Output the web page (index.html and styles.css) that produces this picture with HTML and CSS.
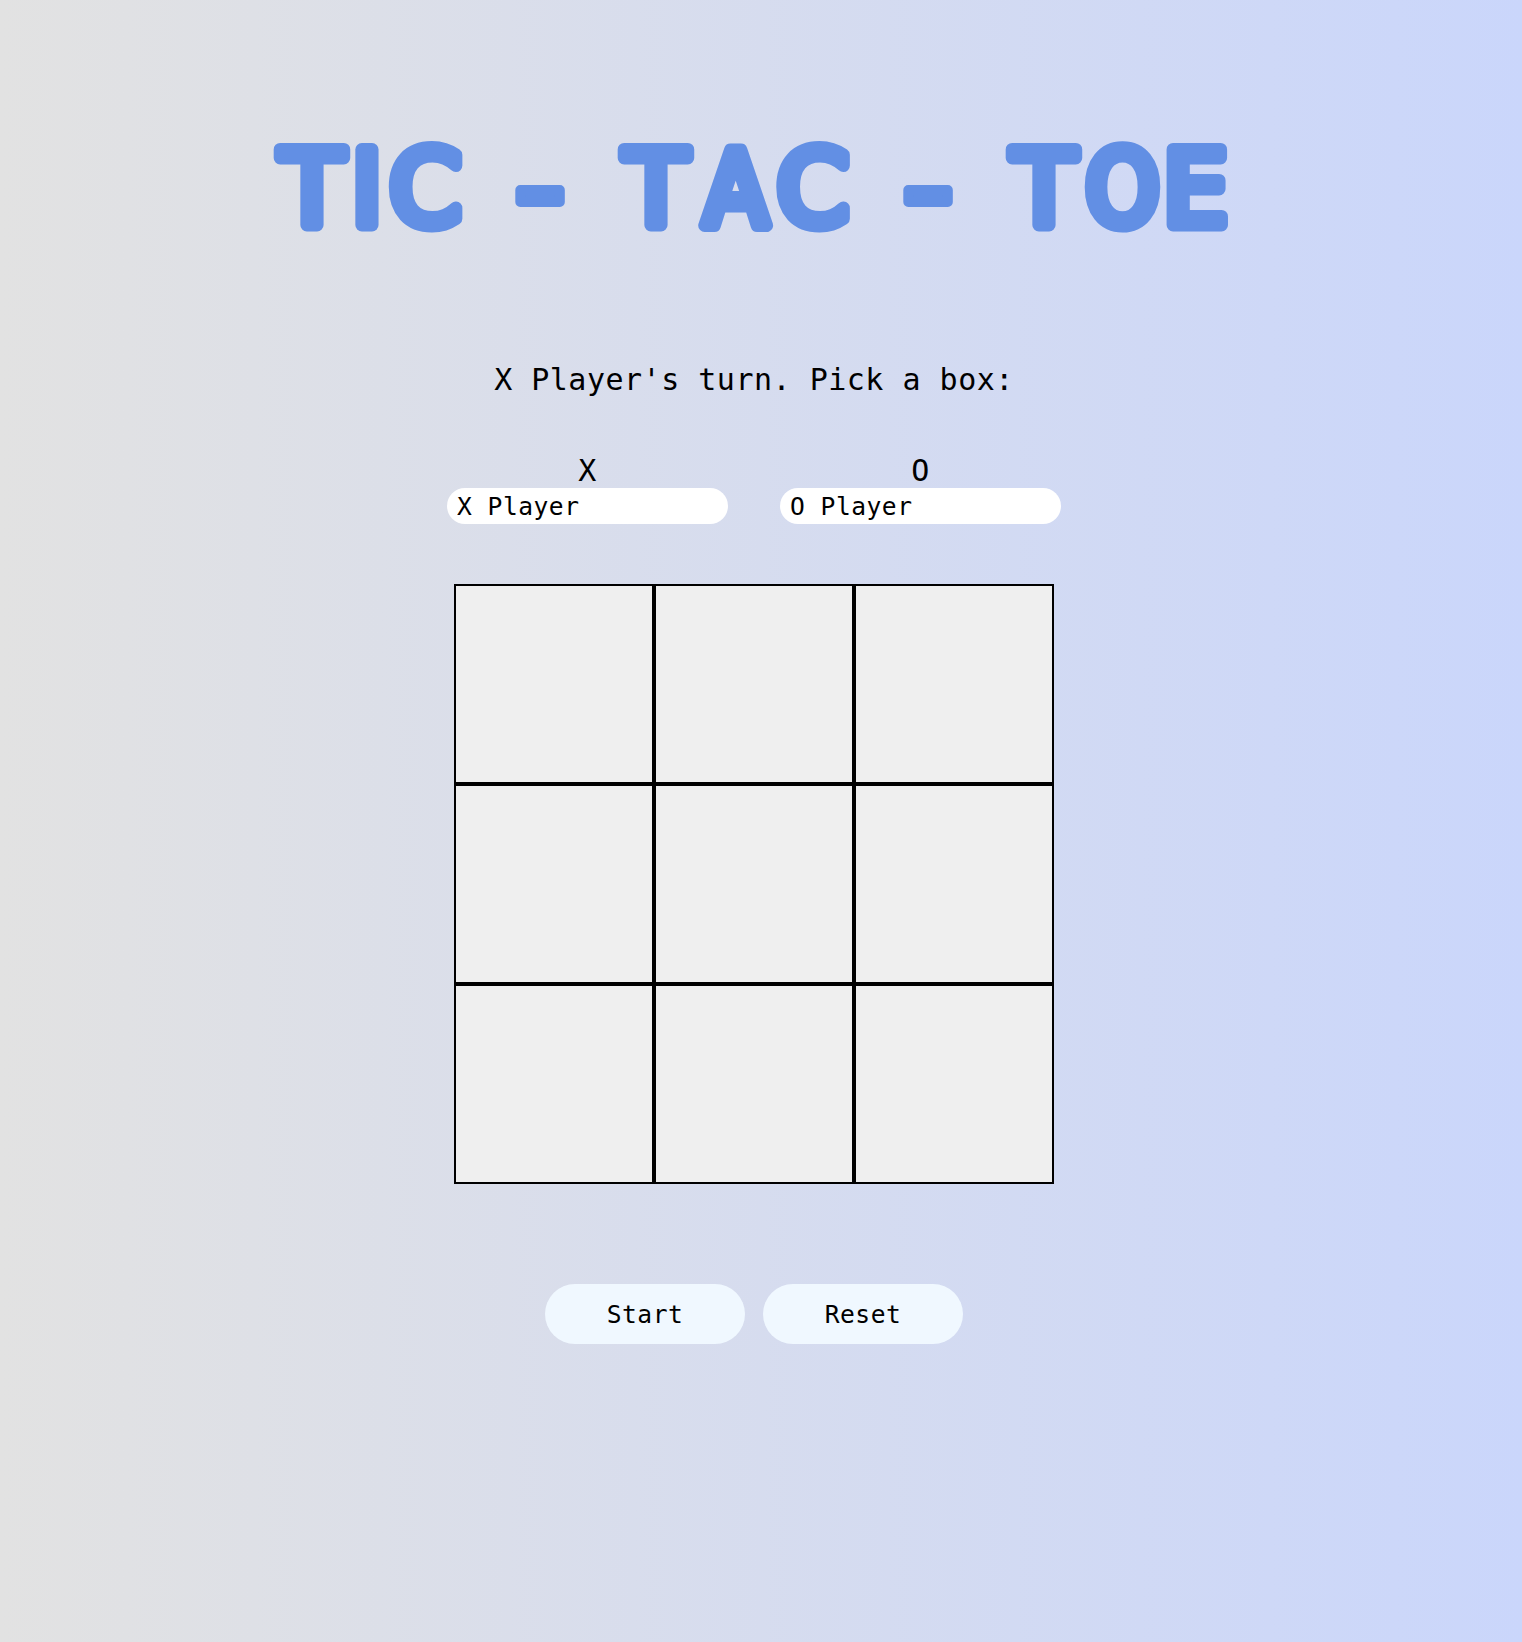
FILE: index.html
```html
<!DOCTYPE html>
<html lang="en">
<head>
<meta charset="utf-8">
<title>Tic - Tac - Toe</title>
<link rel="stylesheet" href="styles.css">
</head>
<body>
<h1 class="title">
  <svg class="title-art" viewBox="254 127 1000 120">
    <text y="224.5"><tspan x="280.5">T</tspan><tspan x="351.8">I</tspan><tspan x="389.5">C</tspan> <tspan class="dash" x="513" y="236.5">-</tspan> <tspan x="624.5" y="224.5">T</tspan><tspan class="narrow" x="704">A</tspan><tspan x="777">C</tspan> <tspan class="dash" x="901" y="236.5">-</tspan> <tspan x="1012.5" y="224.5">T</tspan><tspan class="narrow" x="1086">O</tspan><tspan x="1163">E</tspan></text>
  </svg>
</h1>
<p class="status">X Player's turn. Pick a box:</p>
<div class="players">
  <label class="player">X<input type="text" value="X Player"></label>
  <label class="player">O<input type="text" value="O Player"></label>
</div>
<main class="board">
  <div class="cell"></div><div class="cell"></div><div class="cell"></div>
  <div class="cell"></div><div class="cell"></div><div class="cell"></div>
  <div class="cell"></div><div class="cell"></div><div class="cell"></div>
</main>
<div class="controls">
  <button class="button">Start</button>
  <button class="button">Reset</button>
</div>
</body>
</html>
```
FILE: styles.css
```css
* { box-sizing: border-box; }

body {
  margin: 0;
  min-height: 1642px;
  padding: 127px 14px 0 0;
  display: flex;
  flex-direction: column;
  align-items: center;
  background: linear-gradient(to right, #e2e2e2, #cad6fb);
  font-family: "DejaVu Sans Mono", monospace;
  font-size: 30px;
  letter-spacing: 0.5px;
  color: #000;
}

.title {
  margin: 0;
  height: 120px;
}
.title-art {
  display: block;
  width: 1000px;
  height: 120px;
  overflow: visible;
  font: 103px "DejaVu Sans", sans-serif;
  letter-spacing: 0;
  fill: #628fe4;
  stroke: #628fe4;
  stroke-width: 13px;
  stroke-linejoin: round;
}
.narrow { font-family: "DejaVu Sans Condensed", "DejaVu Sans", sans-serif; font-stretch: condensed; }
.dash { font-size: 150px; stroke-width: 10px; }

.status {
  margin: 113px 0 0;
  height: 40px;
  line-height: 40px;
}

.players {
  display: flex;
  gap: 52px;
  margin-top: 52px;
}
.player {
  display: flex;
  flex-direction: column;
  align-items: center;
  height: 72px;
  margin-top: 0;
  padding-top: 2px;
  line-height: 34px;
}
.player input {
  width: 281px;
  height: 36px;
  padding: 1px 10px 0;
  border: 0;
  border-radius: 18px;
  background: #fff;
  color: #000;
  font: 24.6px "DejaVu Sans Mono", monospace;
  letter-spacing: 0.5px;
}

.board {
  display: grid;
  grid-template-columns: repeat(3, 200px);
  grid-auto-rows: 200px;
  margin-top: 60px;
}
.cell {
  border: 2px solid #000;
  background: #efefef;
}

.controls {
  display: flex;
  gap: 18px;
  margin-top: 100px;
}
.button {
  width: 200px;
  height: 60px;
  padding: 1px 0 0;
  border: 0;
  border-radius: 30px;
  background: #f0f8ff;
  color: #000;
  font: 24.6px "DejaVu Sans Mono", monospace;
  letter-spacing: 0.5px;
}
```
